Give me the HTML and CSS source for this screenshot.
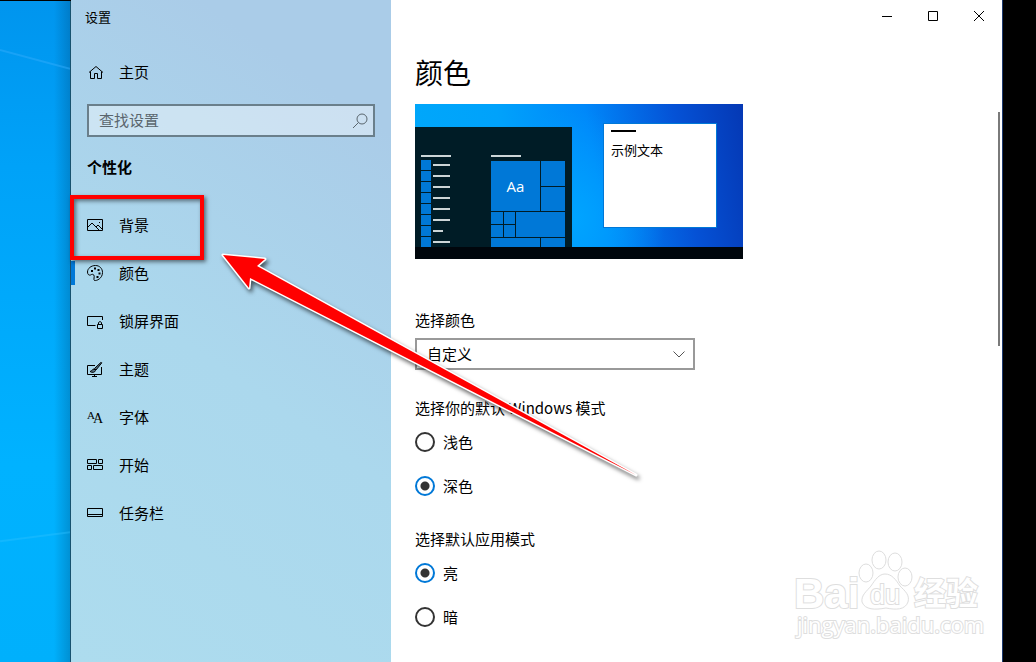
FILE: index.html
```html
<!DOCTYPE html>
<html lang="zh-CN">
<head>
  <meta charset="UTF-8">
  <title>设置</title>
  <link rel="stylesheet" href="styles.css">
</head>
<body>

<div class="desktop">
  <svg class="wallpaper" viewBox="0 0 70 662" preserveAspectRatio="none" aria-hidden="true">
    <path d="M0 49L70 68" stroke="#2fabfb" stroke-width="2" opacity="0.5"/>
    <path d="M0 541L70 532" stroke="#2cc0ff" stroke-width="2" opacity="0.4"/>
  </svg>
</div>

<div class="window">
  <aside class="sidebar">
    <div class="window-title">设置</div>

    <a class="nav-item home" href="#">
      <svg class="icon" viewBox="0 0 16 16"><path d="M2 8.5L9 2.5L16 8.5M3.5 7.5V14.5H7.5V9.5H10.5V14.5H14.5V7.5"/></svg>
      主页
    </a>

    <div class="search">
      <input type="text" id="search" placeholder="查找设置" aria-label="查找设置">
      <svg class="search-icon" viewBox="0 0 16 16"><circle cx="10" cy="6" r="5"/><path d="M6.5 9.5L1 15"/></svg>
    </div>

    <h2>个性化</h2>

    <nav>
      <a class="nav-item" href="#">
        <svg class="icon" viewBox="0 0 16 16"><path d="M0.5 2.5H15.5V13.5H0.5ZM1 10L5 6L12.5 13.5M9 10L11 8L15 12"/><path d="M12 5.5H13"/></svg>
        背景
      </a>
      <a class="nav-item active" href="#">
        <svg class="icon" viewBox="0 0 16 16"><path d="M7.5 15.5C9.5 16 15.5 13.5 15.5 7.5C15.5 3.5 12.5 .5 8.5 .5C4 .5 .5 3.5 .5 7C.5 9.5 2 10.5 3.5 10C5 9.2 6 9 6.8 10C8 11.5 6 14.5 7.5 15.5Z"/><path class="dots" d="M4 5h2v2h-2zM7 2.5h2v2h-2zM10.5 4h2v2h-2zM11.5 7.5h2v2h-2zM9.5 11h2v2h-2z"/></svg>
        颜色
      </a>
      <a class="nav-item" href="#">
        <svg class="icon" viewBox="0 0 16 16"><path d="M8.5 12.5H.5V3.5H15.5V7M10.5 11.5H15.5V15.5H10.5ZM11.5 11.5V9.5Q13 7.5 14.5 9.5V11.5"/></svg>
        锁屏界面
      </a>
      <a class="nav-item" href="#">
        <svg class="icon" viewBox="0 0 16 16"><path d="M8 4.5H.5V13.5H14.5V6M7.5 13.5V15.5M5 15.5H10"/><path class="brush" d="M14.8 1.8L13.8 1.5L7.5 7.5L9 9ZM7 8C5 8 5.5 10 3 10.5C5 12 8 11.5 8.5 9.5Z"/></svg>
        主题
      </a>
      <a class="nav-item" href="#">
        <svg class="icon letters" viewBox="0 0 16 16"><text x="0" y="10" font-size="11">A<tspan dx="-2" dy="4" font-size="14">A</tspan></text></svg>
        字体
      </a>
      <a class="nav-item" href="#">
        <svg class="icon" viewBox="0 0 16 16"><path d="M.5 2.5H9.5V6.5H.5ZM11.5 2.5H15.5V6.5H11.5ZM.5 8.5H4.5V12.5H.5ZM6.5 8.5H15.5V12.5H6.5Z"/></svg>
        开始
      </a>
      <a class="nav-item" href="#">
        <svg class="icon" viewBox="0 0 16 16"><path d="M.5 3.5H15.5V11.5H.5ZM.5 9.5H15.5"/></svg>
        任务栏
      </a>
    </nav>
  </aside>

  <main>
    <div class="window-controls">
      <button aria-label="最小化"><svg viewBox="0 0 10 10"><path d="M0 5.5H10"/></svg></button>
      <button aria-label="最大化"><svg viewBox="0 0 10 10"><path d="M.5 .5H9.5V9.5H.5Z"/></svg></button>
      <button aria-label="关闭"><svg viewBox="0 0 10 10"><path d="M0 0L10 10M10 0L0 10"/></svg></button>
    </div>

    <div class="scroll-area">
      <div class="content">
        <h1>颜色</h1>

        <div class="preview">
          <div class="preview-desktop">
            <div class="start-menu">
              <div class="app-list">
                <div class="bar"></div>
                <div class="app"></div>
                <div class="app"></div>
                <div class="app"></div>
                <div class="app"></div>
                <div class="app"></div>
                <div class="app"></div>
                <div class="app short"></div>
                <div class="app"></div>
              </div>
              <div class="tile-area">
                <div class="bar"></div>
                <div class="tiles">
                  <div class="tile big">Aa</div>
                  <div class="tile"></div>
                  <div class="tile"></div>
                  <div class="tile"></div>
                  <div class="tile"></div>
                  <div class="tile wide"></div>
                  <div class="tile"></div>
                  <div class="tile"></div>
                  <div class="tile medium"></div>
                  <div class="tile"></div>
                </div>
              </div>
            </div>
            <div class="sample-window">示例文本</div>
          </div>
          <div class="preview-taskbar"></div>
        </div>

        <label class="field-label" for="color">选择颜色</label>
        <div class="select-box">
          <select id="color">
            <option>自定义</option>
          </select>
          <svg class="chevron" viewBox="0 0 12 12"><path d="M.5 3.5L6 9L11.5 3.5"/></svg>
        </div>

        <fieldset>
          <legend>选择你的默认 Windows 模式</legend>
          <label class="radio"><input type="radio" name="windowsMode">浅色</label>
          <label class="radio"><input type="radio" name="windowsMode" checked>深色</label>
        </fieldset>

        <fieldset>
          <legend>选择默认应用模式</legend>
          <label class="radio"><input type="radio" name="appMode" checked>亮</label>
          <label class="radio"><input type="radio" name="appMode">暗</label>
        </fieldset>
      </div>
      <div class="scrollbar"></div>
    </div>
  </main>
</div>

<!-- annotations over the window -->
<div class="highlight"></div>

<svg class="arrow" viewBox="0 0 430 240" aria-hidden="true">
  <path d="M13 15L55 19L47 26L426 235L40 38L39 48Z"/>
</svg>

<svg class="watermark" viewBox="0 0 200 96" aria-hidden="true">
  <text class="brand" x="-1" y="62" font-size="42">Bai</text>
  <ellipse cx="71" cy="27" rx="7" ry="9"/>
  <ellipse cx="84" cy="14" rx="7" ry="9"/>
  <ellipse cx="100" cy="16" rx="7" ry="9"/>
  <ellipse cx="110" cy="31" rx="7" ry="9"/>
  <path d="M90 28C97 28 101 34 105 40C110 45 115 49 113 56C110 64 101 64 91 62C80 64 70 64 67 56C66 49 72 45 76 40C80 34 84 28 90 28Z"/>
  <text class="brand du" x="75" y="58" font-size="27">du</text>
  <text class="brand cn" x="119" y="59" font-size="32">经验</text>
  <text class="url" x="2" y="87" font-size="22">jingyan.baidu.com</text>
</svg>

</body>
</html>
```

FILE: styles.css
```css
* {
  box-sizing: border-box;
}
body {
  display: flex;
  height: 100vh;
  margin: 0;
  padding-right: 33px;
  overflow: hidden;
  position: relative;
  background: black;
  color: black;
  font-family: "Noto Sans CJK SC", sans-serif;
  font-size: 15px;
  line-height: 20px;
}
h1, h2 {
  margin: 0;
}
a {
  color: inherit;
  text-decoration: none;
}
svg {
  fill: none;
  stroke: black;
  flex-shrink: 0;
}

/* desktop behind the window */
.desktop {
  width: 71px;
  flex-shrink: 0;
  margin-top: 1px;
  border-right: 1px solid #17526f;
  background:
    linear-gradient(90deg, transparent 54px, rgba(0, 50, 90, 0.25)),
    linear-gradient(#0095ee, #00a2f8 25%, #00b2ff 70%, #00b0fc);
}
.wallpaper {
  display: block;
  width: 100%;
  height: 100%;
}

.window {
  display: flex;
  flex: 1;
  background: white;
  border-right: 1px solid #1c3a70;
}

/* sidebar */
.sidebar {
  width: 320px;
  flex-shrink: 0;
  background: linear-gradient(35deg, #addcee, #abd8ed 45%, #aacce8 85%);
}
.window-title {
  padding-left: 14px;
  font-size: 13px;
  line-height: 34px;
}
.nav-item {
  display: flex;
  align-items: center;
  gap: 16px;
  height: 48px;
  padding-left: 16px;
}
.nav-item.home {
  margin-top: 14px;
}
.nav-item.active {
  padding-left: 12px;
}
.nav-item.active::before {
  content: "";
  width: 4px;
  height: 24px;
  margin-left: -12px;
  margin-right: -4px;
  background: #0078d7;
}
.icon {
  width: 16px;
  height: 16px;
  overflow: visible;
}
.icon .dots,
.letters text {
  fill: black;
  stroke: none;
}
.icon .brush {
  fill: #557080;
}
.letters {
  font-family: "Liberation Serif", serif;
}
.search {
  display: flex;
  align-items: center;
  height: 33px;
  margin: 8px 16px 20px;
  padding-right: 5px;
  border: 2px solid #6a7f8b;
  background: rgba(255, 255, 255, 0.4);
}
.search input {
  flex: 1;
  min-width: 0;
  padding: 0 10px 2px;
  border: none;
  outline: none;
  background: none;
  font: inherit;
}
.search input::placeholder {
  color: #5a666e;
}
.search-icon {
  width: 16px;
  height: 16px;
  stroke: #5a666e;
}
h2 {
  margin: 0 16px 24px;
  font-size: 15px;
  line-height: 20px;
}

/* main pane */
main {
  display: flex;
  flex-direction: column;
  flex: 1;
  min-width: 0;
}
.window-controls {
  display: flex;
  justify-content: flex-end;
}
.window-controls button {
  display: flex;
  align-items: center;
  justify-content: center;
  width: 46px;
  height: 32px;
  padding: 0;
  border: none;
  background: none;
}
.window-controls svg {
  width: 10px;
  height: 10px;
}
.scroll-area {
  display: flex;
  flex: 1;
}
.content {
  flex: 1;
  padding: 20px 24px;
}
.scrollbar {
  width: 2px;
  height: 234px;
  margin: 80px 2px 0 0;
  background: #7a7a7a;
}
h1 {
  margin-bottom: 12px;
  font-size: 28px;
  font-weight: normal;
  line-height: 40px;
}

/* theme preview */
.preview {
  width: 328px;
  margin-bottom: 51px;
}
.preview-desktop {
  display: flex;
  align-items: flex-start;
  gap: 31px;
  height: 143px;
  background:
    radial-gradient(ellipse 90px 110px at 160px 115px, #00a4ff, transparent),
    linear-gradient(80deg, #00a8fa, #00a2fb 30%, #0088fa 55%, #0552d6 80%, #0538b4);
}
.preview-taskbar {
  height: 12px;
  background: #00060c;
}
.start-menu {
  display: flex;
  gap: 40px;
  width: 157px;
  height: 120px;
  margin-top: 23px;
  padding: 28px 6px 0;
  background: #001c26;
}
.bar {
  width: 30px;
  height: 2px;
  background: #ccd5d7;
}
.app-list .bar {
  margin-bottom: 3px;
}
.app {
  display: flex;
  align-items: center;
  gap: 2px;
  margin-bottom: 1px;
}
.app::before {
  content: "";
  width: 10px;
  height: 10px;
  background: #0078d7;
}
.app::after {
  content: "";
  width: 17px;
  height: 2px;
  background: #ccd5d7;
}
.app.short::after {
  width: 10px;
}
.tile-area .bar {
  margin-bottom: 4px;
}
.tiles {
  display: grid;
  grid-template-columns: 12px 11px 24px 24px;
  grid-template-rows: 25px 24px 12px 12px 9px;
  gap: 1px;
}
.tile {
  background: #0078d7;
}
.tile.big {
  display: flex;
  align-items: center;
  justify-content: center;
  grid-column: span 3;
  grid-row: span 2;
  color: white;
  font-family: "Open Sans", sans-serif;
}
.tile.wide {
  grid-column: 3 / span 2;
  grid-row: 3 / span 2;
}
.tile.medium {
  grid-column: span 3;
}
.sample-window {
  width: 114px;
  height: 105px;
  margin-top: 19px;
  padding: 6px 7px;
  border: 1px solid #0078d7;
  background: white;
  font-size: 13px;
}
.sample-window::before {
  content: "";
  display: block;
  width: 25px;
  height: 2px;
  margin-bottom: 8px;
  background: black;
}

/* form */
.field-label {
  display: block;
  margin-bottom: 8px;
}
.select-box {
  position: relative;
  width: 280px;
}
.select-box select {
  appearance: none;
  display: block;
  width: 100%;
  height: 32px;
  padding: 0 30px 0 10px;
  border: 2px solid #999;
  border-radius: 0;
  background: white;
  color: black;
  font: inherit;
}
.chevron {
  position: absolute;
  top: 10px;
  right: 10px;
  width: 12px;
  height: 12px;
  stroke: #555;
  pointer-events: none;
}
fieldset {
  min-width: 0;
  margin: 28px 0 33px;
  padding: 0;
  border: none;
}
legend {
  padding: 0 0 14px;
}
.radio {
  display: flex;
  align-items: center;
  gap: 8px;
  height: 20px;
}
.radio + .radio {
  margin-top: 24px;
}
.radio input {
  appearance: none;
  width: 20px;
  height: 20px;
  margin: 0;
  border: 2px solid #333;
  border-radius: 50%;
  background: white;
}
.radio input:checked {
  border-color: #0078d7;
  background: radial-gradient(circle, #333 4px, white 5px);
}

/* annotations */
.highlight {
  position: absolute;
  left: 70px;
  top: 195px;
  width: 134px;
  height: 65px;
  border: 4px solid red;
  box-shadow: 2px 2px 4px rgba(0, 0, 0, 0.5), inset 2px 2px 4px rgba(0, 0, 0, 0.5);
}
.arrow {
  position: absolute;
  left: 210px;
  top: 240px;
  width: 430px;
  height: 240px;
  overflow: visible;
  fill: red;
  stroke: white;
  stroke-width: 3px;
  stroke-linejoin: round;
  paint-order: stroke;
  filter: drop-shadow(2px 3px 2px rgba(0, 0, 0, 0.6));
}
.watermark {
  position: absolute;
  left: 795px;
  top: 546px;
  width: 200px;
  height: 96px;
  overflow: visible;
  fill: white;
  stroke: #dedede;
  stroke-width: 1px;
}
.watermark text {
  paint-order: stroke;
  stroke-width: 2px;
}
.brand {
  font-family: "Liberation Sans", sans-serif;
  font-weight: bold;
}
.brand.du {
  font-weight: normal;
}
.brand.cn {
  font-family: "Noto Sans CJK SC", sans-serif;
}
.url {
  font-family: "Open Sans", sans-serif;
}
```
